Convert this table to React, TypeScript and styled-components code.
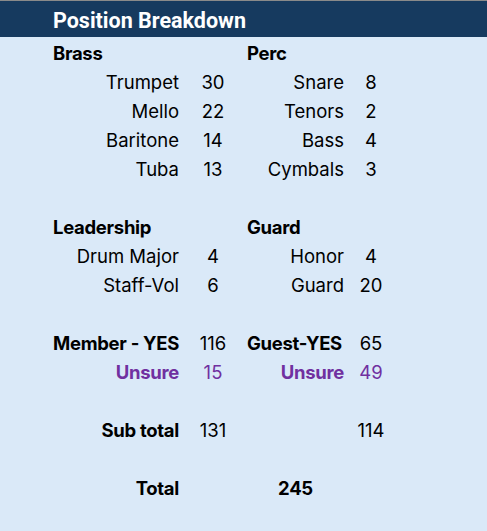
import React from "react";
import styled, { createGlobalStyle } from "styled-components";

const GlobalStyle = createGlobalStyle`
  html, body {
    margin: 0;
    padding: 0;
    background: #dae9f8;
  }
  body {
    font-family: Inter, "Noto Sans", "Liberation Sans", sans-serif;
    color: #000;
  }
`;

type Align = "left" | "right" | "center";

type Row = {
  cells: { col: number; text: string; align: Align; bold?: boolean; purple?: boolean }[];
};

const rows: Row[] = [
  {
    cells: [
      { col: 2, text: "Brass", align: "left", bold: true },
      { col: 4, text: "Perc", align: "left", bold: true },
    ],
  },
  {
    cells: [
      { col: 2, text: "Trumpet", align: "right" },
      { col: 3, text: "30", align: "center" },
      { col: 4, text: "Snare", align: "right" },
      { col: 5, text: "8", align: "center" },
    ],
  },
  {
    cells: [
      { col: 2, text: "Mello", align: "right" },
      { col: 3, text: "22", align: "center" },
      { col: 4, text: "Tenors", align: "right" },
      { col: 5, text: "2", align: "center" },
    ],
  },
  {
    cells: [
      { col: 2, text: "Baritone", align: "right" },
      { col: 3, text: "14", align: "center" },
      { col: 4, text: "Bass", align: "right" },
      { col: 5, text: "4", align: "center" },
    ],
  },
  {
    cells: [
      { col: 2, text: "Tuba", align: "right" },
      { col: 3, text: "13", align: "center" },
      { col: 4, text: "Cymbals", align: "right" },
      { col: 5, text: "3", align: "center" },
    ],
  },
  { cells: [] },
  {
    cells: [
      { col: 2, text: "Leadership", align: "left", bold: true },
      { col: 4, text: "Guard", align: "left", bold: true },
    ],
  },
  {
    cells: [
      { col: 2, text: "Drum Major", align: "right" },
      { col: 3, text: "4", align: "center" },
      { col: 4, text: "Honor", align: "right" },
      { col: 5, text: "4", align: "center" },
    ],
  },
  {
    cells: [
      { col: 2, text: "Staff-Vol", align: "right" },
      { col: 3, text: "6", align: "center" },
      { col: 4, text: "Guard", align: "right" },
      { col: 5, text: "20", align: "center" },
    ],
  },
  { cells: [] },
  {
    cells: [
      { col: 2, text: "Member - YES", align: "left", bold: true },
      { col: 3, text: "116", align: "center" },
      { col: 4, text: "Guest-YES", align: "left", bold: true },
      { col: 5, text: "65", align: "center" },
    ],
  },
  {
    cells: [
      { col: 2, text: "Unsure", align: "right", bold: true, purple: true },
      { col: 3, text: "15", align: "center", purple: true },
      { col: 4, text: "Unsure", align: "right", bold: true, purple: true },
      { col: 5, text: "49", align: "center", purple: true },
    ],
  },
  { cells: [] },
  {
    cells: [
      { col: 2, text: "Sub total", align: "right", bold: true },
      { col: 3, text: "131", align: "center" },
      { col: 5, text: "114", align: "center" },
    ],
  },
  { cells: [] },
  {
    cells: [
      { col: 2, text: "Total", align: "right", bold: true },
      { col: 4, text: "245", align: "center", bold: true },
    ],
  },
  { cells: [] },
];

export default function App() {
  return (
    <>
      <GlobalStyle />
      <Style.Page>
        <Style.Header>
          <Style.Title>Position Breakdown</Style.Title>
        </Style.Header>
        <Style.Grid>
          {rows.map((row, r) => {
            if (row.cells.length === 0) {
              return <Style.Spacer key={r} style={{ gridRow: r + 1 }} />;
            }
            return row.cells.map((cell, i) => (
              <Style.Cell
                key={`${r}-${i}`}
                $align={cell.align}
                $bold={cell.bold}
                $purple={cell.purple}
                style={{ gridRow: r + 1, gridColumn: cell.col }}
              >
                {cell.text}
              </Style.Cell>
            ));
          })}
        </Style.Grid>
      </Style.Page>
    </>
  );
}

const Style = {
  Page: styled.div`
    width: 487px;
    min-height: 531px;
    background: #dae9f8;
    border-top: 1px solid #8a8a8a;
    box-sizing: border-box;
  `,
  Header: styled.div`
    height: 36px;
    background: #163a5f;
    display: flex;
    align-items: center;
    padding-left: 53px;
    padding-top: 2px;
    box-sizing: border-box;
  `,
  Title: styled.div`
    color: #fff;
    font-family: Roboto, Inter, sans-serif;
    font-size: 21.5px;
    font-weight: 700;
  `,
  Grid: styled.div`
    display: grid;
    grid-template-columns: 50px 132px 62px 103px 48px 1fr;
    grid-auto-rows: 29px;
    padding-top: 1px;
  `,
  Spacer: styled.div`
    grid-column: 1 / -1;
  `,
  Cell: styled.div<{ $align: Align; $bold?: boolean; $purple?: boolean }>`
    display: flex;
    align-items: center;
    justify-content: ${(p) =>
      p.$align === "left" ? "flex-start" : p.$align === "right" ? "flex-end" : "center"};
    padding: 0 3px;
    font-size: 18.5px;
    font-weight: ${(p) => (p.$bold ? 700 : 400)};
    letter-spacing: ${(p) => (p.$bold ? "-0.3px" : "0")};
    color: ${(p) => (p.$purple ? "#7030a0" : "#000")};
    white-space: nowrap;
  `,
};
